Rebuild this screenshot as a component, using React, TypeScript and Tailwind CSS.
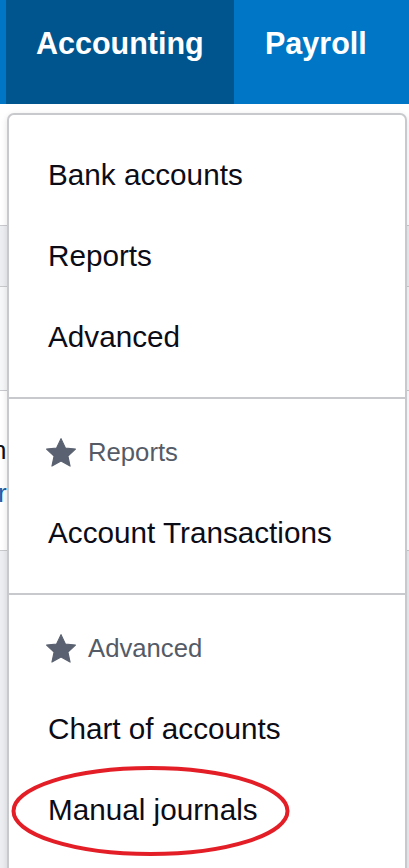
import React from "react";

const font = { fontFamily: '"Liberation Sans", Arial, sans-serif' };

function Star() {
  return (
    <svg width="30" height="29" viewBox="1.4 1.2 21.2 20.4" className="shrink-0">
      <path
        d="M12 1.6l3.1 6.6 7.1.8-5.3 4.9 1.5 7.1L12 17.4 5.6 21l1.5-7.1L1.8 9l7.1-.8z"
        fill="#5a6170"
        stroke="#5a6170"
        strokeWidth="0.8"
        strokeLinejoin="round"
      />
    </svg>
  );
}

function Item({ label }: { label: string }) {
  return (
    <div className="h-[81px] flex items-center pl-[39px] text-[29.7px] leading-none text-[#0c0c16]">
      {label}
    </div>
  );
}

function Header({ label }: { label: string }) {
  return (
    <div className="h-[81px] flex items-center gap-[12px] pl-[37px] pt-[2px] text-[25.7px] leading-none text-[#545b67]">
      <Star />
      <span>{label}</span>
    </div>
  );
}

export default function App() {
  return (
    <div className="relative w-[409px] h-[868px] overflow-hidden bg-white" style={font}>
      {/* top nav */}
      <div className="h-[104px] bg-[#0077c6] pl-[6px] flex">
        <div className="bg-[#00558f] px-[30px] pt-[28px] text-[30.5px] font-bold text-white leading-none h-full w-[228px]">
          Accounting
        </div>
        <div className="px-[31px] pt-[28px] text-[30.5px] font-bold text-white leading-none">Payroll</div>
      </div>

      {/* page underneath */}
      <div className="flex flex-col">
        <div className="h-[122px] border-b border-[#c9cacd]" />
        <div className="h-[61px] bg-[#eceef1] border-b border-[#c9cacd]" />
        <div className="h-[104px] bg-[#f6f7f8] border-b border-[#c9cacd]" />
        <div className="h-[160px] border-b border-[#c9cacd]">
          <div className="pt-[46px] text-[26px] leading-none text-[#111] -ml-[8px]">n</div>
          <div className="pt-[17px] text-[26px] leading-none text-[#1d5fa8] -ml-[2px]">r</div>
        </div>
        <div className="h-[320px] bg-[#eceef1]" />
      </div>

      {/* dropdown menu */}
      <div className="absolute left-[7px] top-[113px] w-[400px] h-[800px] bg-white border-2 border-[#c8c9cd] rounded-[7px] shadow-[0_2px_6px_rgba(0,0,0,0.12)]">
        <div className="pt-[19px] pb-[20px]">
          <Item label="Bank accounts" />
          <Item label="Reports" />
          <Item label="Advanced" />
        </div>
        <div className="h-[2px] bg-[#c8c9cd]" />
        <div className="pt-[12px] pb-[20px]">
          <Header label="Reports" />
          <Item label="Account Transactions" />
        </div>
        <div className="h-[2px] bg-[#c8c9cd]" />
        <div className="pt-[12px]">
          <Header label="Advanced" />
          <Item label="Chart of accounts" />
          <Item label="Manual journals" />
        </div>
      </div>

      {/* annotation */}
      <svg className="absolute left-0 top-0 pointer-events-none" width="409" height="868">
        <ellipse cx="150.5" cy="811" rx="137" ry="43" fill="none" stroke="#e31e26" strokeWidth="4" />
      </svg>
    </div>
  );
}
